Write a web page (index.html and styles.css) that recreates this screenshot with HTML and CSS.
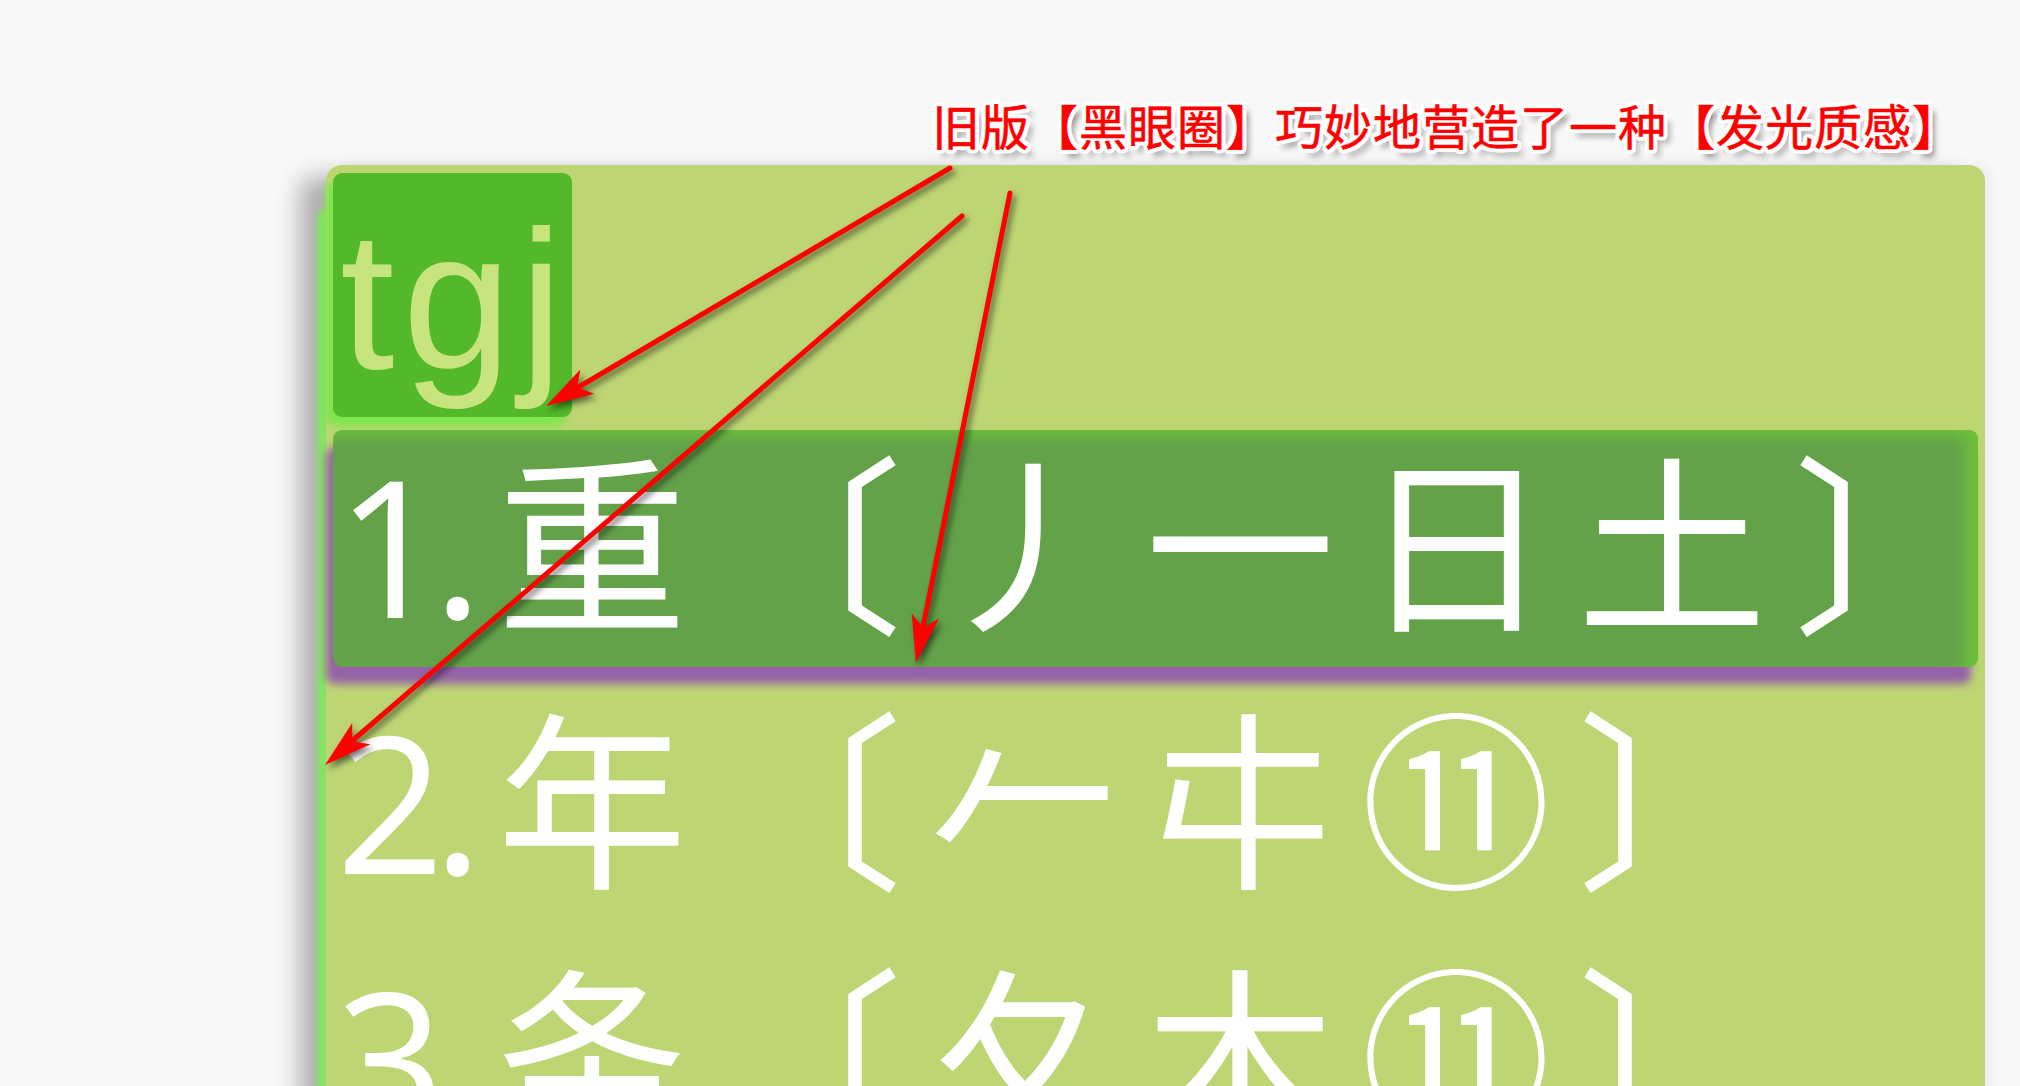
FILE: index.html
```html
<!DOCTYPE html>
<html lang="zh-CN">
<head>
<meta charset="utf-8">
<title>发光质感</title>
<link rel="stylesheet" href="styles.css">
</head>
<body>
<div class="page">
  <div class="caption">旧版【黑眼圈】巧妙地营造了一种【发光质感】</div>
  <div class="panel">
    <div class="code">tgj</div>
    <div class="cand active"><span class="num">1.</span><span class="word">重〔丿一日土〕</span></div>
    <div class="cand"><span class="num">2.</span><span class="word">年〔𠂉㐄⑪〕</span></div>
    <div class="cand"><span class="num">3.</span><span class="word">条〔夂木⑪〕</span></div>
  </div>
  <svg class="arrows" width="2020" height="1086" viewBox="0 0 2020 1086">
    <g class="arrow">
      <line x1="950" y1="168" x2="577" y2="388"/>
      <polygon points="546,406 594.5,393.8 577,387.7 580.3,369.6"/>
    </g>
    <g class="arrow">
      <line x1="962" y1="216" x2="352" y2="741"/>
      <polygon points="325,765 370.4,744.3 352.3,741.5 352.2,723.1"/>
    </g>
    <g class="arrow">
      <line x1="1010" y1="193" x2="923" y2="627"/>
      <polygon points="916,663 939.1,618.6 923.1,627.7 911.7,613.2"/>
    </g>
  </svg>
</div>
</body>
</html>
```
FILE: styles.css
```css
html, body {
  margin: 0;
  background: #f8f8f8;
}

.page {
  position: relative;
  height: 1086px;
  overflow: hidden;
  box-sizing: border-box;
  padding: 94px 0 0 326px;
}

.caption {
  margin-left: 606px;
  font-family: "Noto Sans CJK SC", sans-serif;
  font-size: 48px;
  line-height: 60px;
  letter-spacing: 1px;
  color: #ff0000;
  white-space: nowrap;
  -webkit-text-stroke: 0.6px #ff0000;
  text-shadow:
    4px 0 0 #fff, -4px 0 0 #fff, 0 4px 0 #fff, 0 -4px 0 #fff,
    3px 3px 0 #fff, -3px -3px 0 #fff, 3px -3px 0 #fff, -3px 3px 0 #fff,
    2px 4px 0 #fff, 4px 2px 0 #fff, -2px 4px 0 #fff, 4px -2px 0 #fff,
    -2px -4px 0 #fff, -4px -2px 0 #fff, 2px -4px 0 #fff, -4px 2px 0 #fff,
    6px 7px 6px rgba(0, 0, 0, 0.45);
}

.panel {
  margin-top: 11px;
  width: 1659px;
  height: 1000px;
  box-sizing: border-box;
  padding: 8px 7px 0 7px;
  background: #bed574;
  border-radius: 16px 16px 0 0;
  display: flex;
  flex-direction: column;
  gap: 19px;
  box-shadow:
    -12px 40px 5px -3px #86e464,
    -26px 12px 24px rgba(0, 0, 0, 0.3),
    6px 0 12px rgba(0, 0, 0, 0.05);
}

.code {
  width: 239px;
  height: 244px;
  margin-bottom: -6px;
  box-sizing: border-box;
  padding: 30px 0 0 7px;
  background: #53b92a;
  border-radius: 9px;
  color: #c8e47e;
  font-family: "Liberation Sans", sans-serif;
  font-size: 196px;
  line-height: 196px;
  letter-spacing: 8px;
  box-shadow: -7px 9px 8px #7be84a;
  flex: none;
}

.cand {
  height: 237px;
  flex: none;
  box-sizing: border-box;
  padding-left: 3px;
  color: #ffffff;
  font-family: "Noto Sans CJK SC", sans-serif;
  font-size: 190px;
  line-height: 211px;
  white-space: nowrap;
  border-radius: 9px;
}

.cand.active {
  background: #64a24a;
  box-shadow:
    inset 0 16px 14px -10px #6cc23a,
    inset -24px 0 16px -12px #6cc23a,
    -7px 17px 8px #9562a8;
}

.num {
  display: inline-block;
  width: 161px;
  font-family: "Open Sans", "Noto Sans CJK SC", sans-serif;
  letter-spacing: -12px;
}

.word {
  letter-spacing: 26px;
}

.arrows {
  position: absolute;
  left: 0;
  top: 0;
  pointer-events: none;
}

.arrow {
  filter: drop-shadow(3px 4px 3px rgba(0, 0, 0, 0.55));
}

.arrow line {
  stroke: #ff0000;
  stroke-width: 5;
  stroke-linecap: round;
}

.arrow polygon {
  fill: #ff0000;
}
```
